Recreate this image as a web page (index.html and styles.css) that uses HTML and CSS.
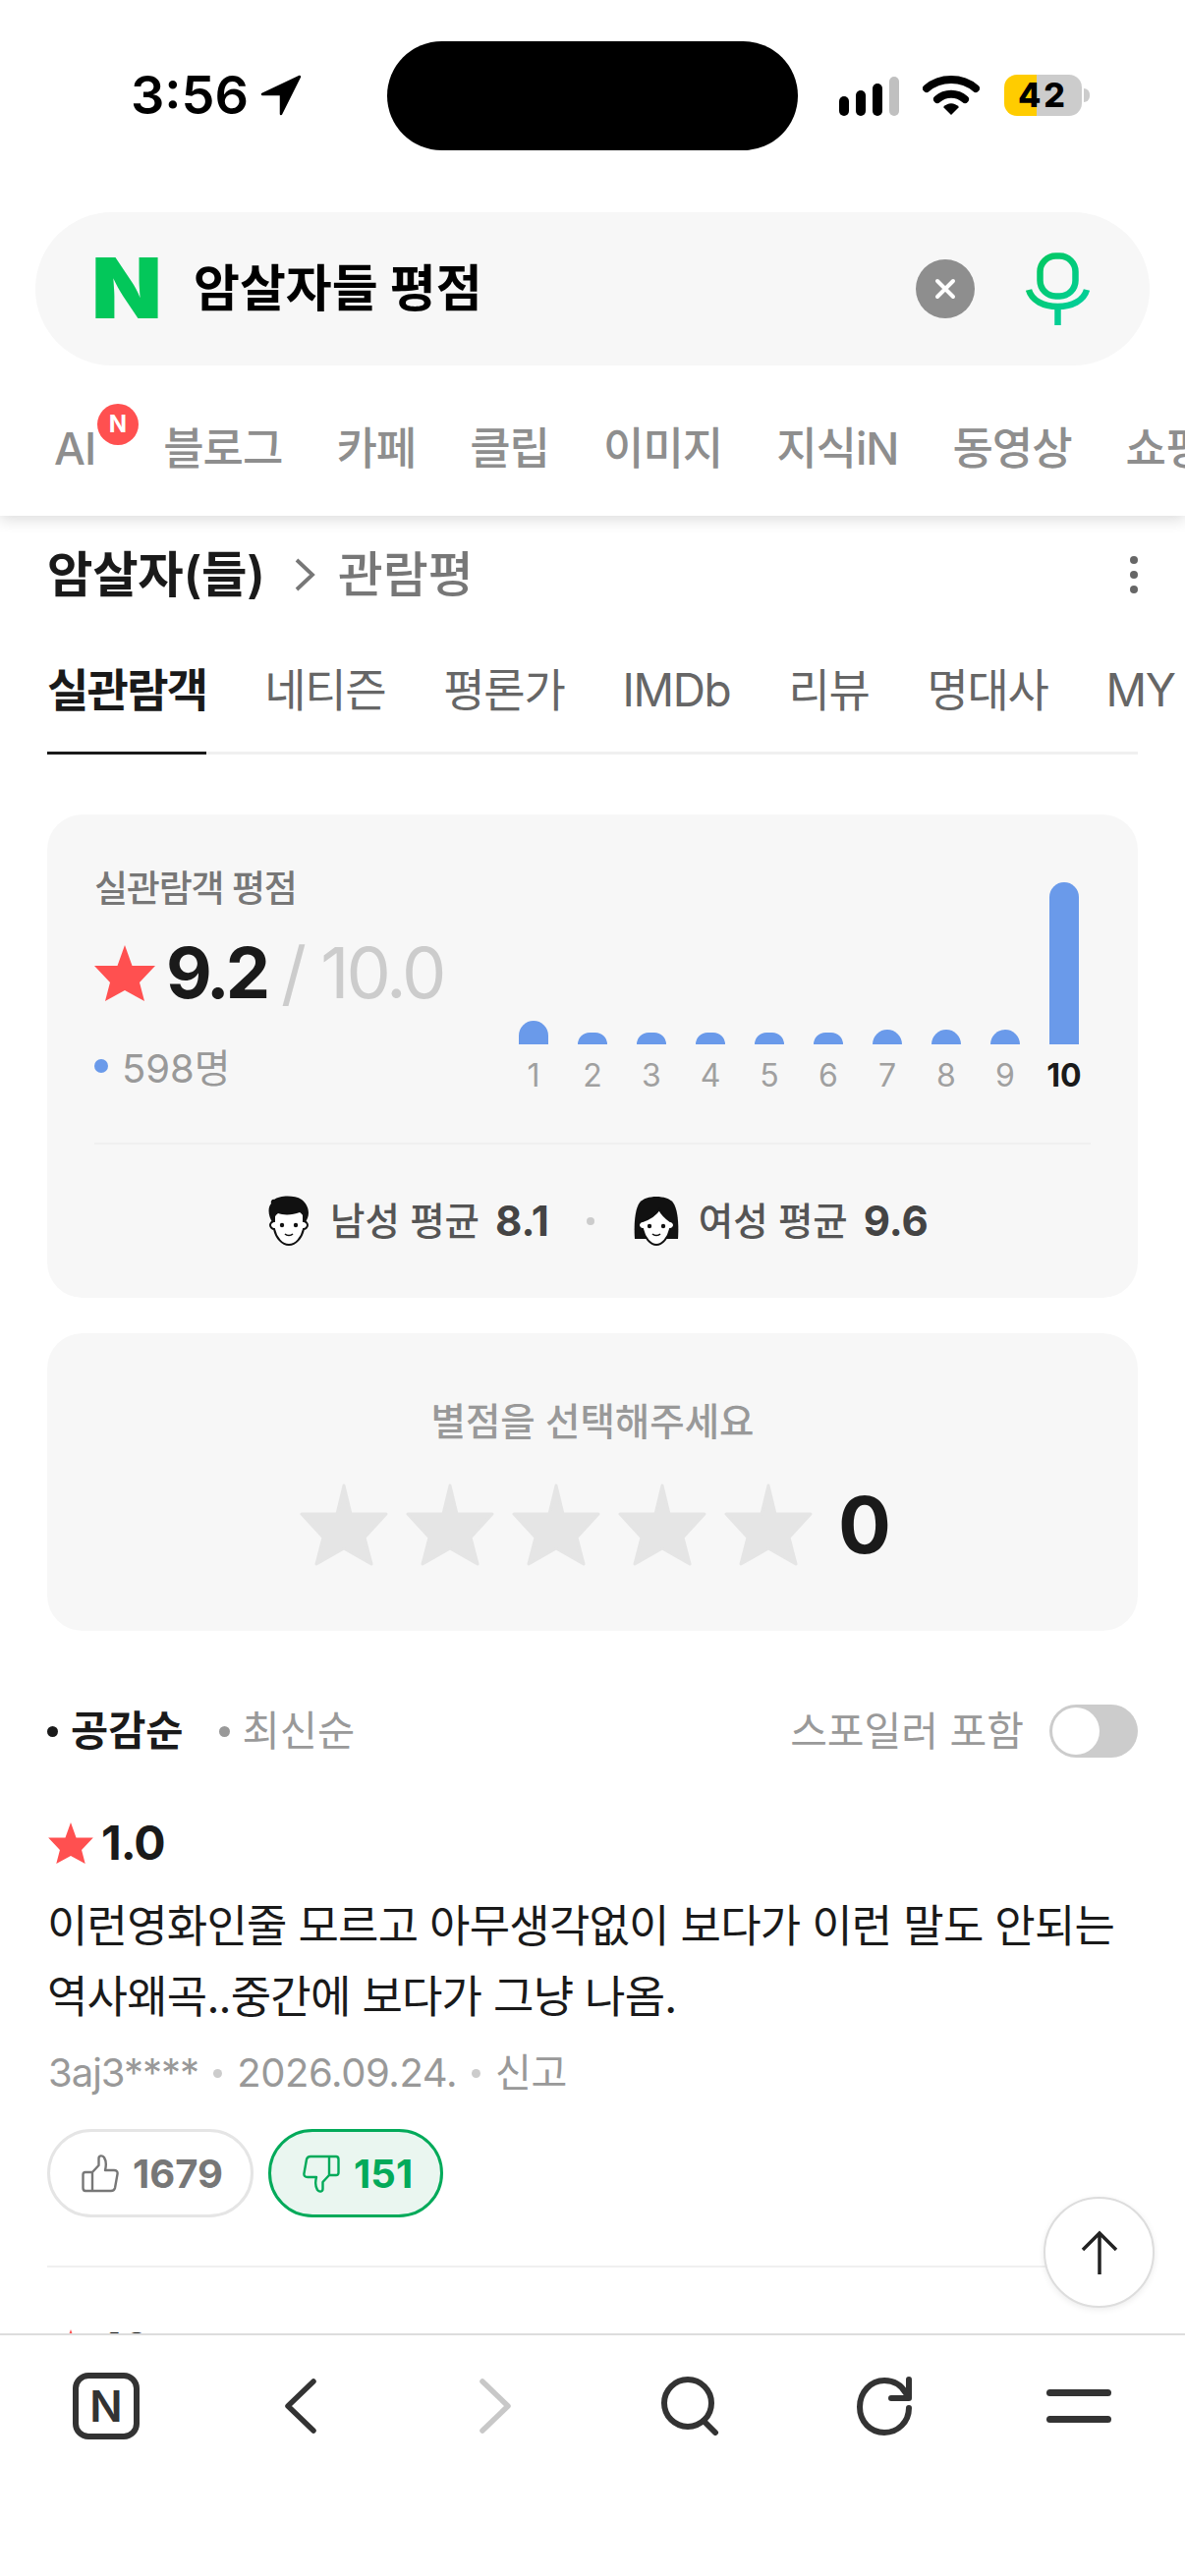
FILE: index.html
```html
<!DOCTYPE html>
<html lang="ko">
<head>
<meta charset="utf-8">
<title>암살자들 평점</title>
<link rel="stylesheet" href="styles.css">
</head>
<body>
<div class="page">
  <header class="header">
    <div class="status">
      <div class="status-left">
        <span class="time">3:56</span>
        <svg class="loc" viewBox="0 0 42 42"><path d="M40 2 L2 20 H21 V40 Z" fill="#000" stroke="#000" stroke-width="2.500" stroke-linejoin="round"/></svg>
      </div>
      <div class="island"></div>
      <div class="status-right">
        <div class="signal"><i class="s1"></i><i class="s2"></i><i class="s3"></i><i class="s4"></i></div>
        <svg class="wifi" viewBox="0 0 58 42" fill="none" stroke="#000" stroke-width="8" stroke-linecap="round"><path d="M4 14 C18 2 40 2 54 14"/><path d="M15 25 C23 18 35 18 43 25"/><path d="M21 33 L29 41 L37 33 C32 28 26 28 21 33Z" fill="#000" stroke="none"/></svg>
        <div class="battery"><span class="batt-num">42</span></div>
        <div class="nub"></div>
      </div>
    </div>
    <div class="search">
      <span class="logo">N</span>
      <span class="query">암살자들 평점</span>
      <span class="clear"><svg viewBox="0 0 60 60" fill="none" stroke="#fff" stroke-width="4" stroke-linecap="round"><path d="M22 22 L38 38 M38 22 L22 38"/></svg></span>
      <svg class="mic" viewBox="0 0 68 76" fill="none" stroke="url(#micg)" stroke-width="6.500" stroke-linecap="butt">
        <defs><linearGradient id="micg" gradientUnits="userSpaceOnUse" x1="5" y1="5" x2="65" y2="60"><stop offset="0" stop-color="#03c75a"/><stop offset="1" stop-color="#03cfa0"/></linearGradient></defs>
        <rect x="16.500" y="4.500" width="36" height="41" rx="16"/><path d="M5 39 C8 50 20 56 34.500 56 C49 56 61 50 64 39"/><path d="M34.500 56 V75"/>
      </svg>
    </div>
    <nav class="cats">
      <span class="cat cat-ai">AI<b class="badge">N</b></span>
      <span class="cat">블로그</span>
      <span class="cat">카페</span>
      <span class="cat">클립</span>
      <span class="cat">이미지</span>
      <span class="cat">지식iN</span>
      <span class="cat">동영상</span>
      <span class="cat">쇼핑</span>
    </nav>
  </header>

  <main class="content">
    <div class="crumb">
      <span class="crumb-main">암살자(들)</span>
      <svg class="crumb-arrow" viewBox="0 0 24 36" fill="none" stroke="#777" stroke-width="3.800"><path d="M5 3 L21 18 L5 33"/></svg>
      <span class="crumb-sub">관람평</span>
      <span class="more"><i></i><i></i><i></i></span>
    </div>
    <div class="tabs">
      <span class="tab tab-on">실관람객</span>
      <span class="tab">네티즌</span>
      <span class="tab">평론가</span>
      <span class="tab">IMDb</span>
      <span class="tab">리뷰</span>
      <span class="tab">명대사</span>
      <span class="tab">MY</span>
    </div>

    <section class="card score-card">
      <div class="score-top">
        <div class="score-left">
          <div class="score-title">실관람객 평점</div>
          <div class="score-line">
            <svg class="star-red" viewBox="0 0 62 57"><path d="M31 0 L38.500 21 H62 L46 38 L51 57 L31 46 L11 57 L16 38 L0 21 H23.500 Z" fill="#ff5050"/></svg>
            <strong class="score-num">9.2</strong>
            <span class="score-max">/ 10.0</span>
          </div>
          <div class="score-count"><i class="dot-blue"></i>598명</div>
        </div>
        <div class="chart">
          <div class="col"><div class="bar" style="height:24px"></div><span class="num">1</span></div>
          <div class="col"><div class="bar" style="height:12px"></div><span class="num">2</span></div>
          <div class="col"><div class="bar" style="height:12px"></div><span class="num">3</span></div>
          <div class="col"><div class="bar" style="height:12px"></div><span class="num">4</span></div>
          <div class="col"><div class="bar" style="height:12px"></div><span class="num">5</span></div>
          <div class="col"><div class="bar" style="height:12px"></div><span class="num">6</span></div>
          <div class="col"><div class="bar" style="height:15px"></div><span class="num">7</span></div>
          <div class="col"><div class="bar" style="height:15px"></div><span class="num">8</span></div>
          <div class="col"><div class="bar" style="height:15px"></div><span class="num">9</span></div>
          <div class="col"><div class="bar" style="height:165px"></div><span class="num num-on">10</span></div>
        </div>
      </div>
      <div class="card-rule"></div>
      <div class="avg">
        <svg class="face" viewBox="0 0 44 52">
          <path d="M7 26 C5 26 3 28 3 30 C3 32 5 34 7 34 C9 43 15 50 22 50 C29 50 35 43 37 34 C39 34 41 32 41 30 C41 28 39 26 37 26 L37 14 H7Z" fill="#fff" stroke="#111" stroke-width="2"/>
          <path d="M6 28 C1 22 0 12 4 8 C3 6 5 3 7 4 C12 0 27 -1 35 4 C42 9 45 20 38 28 C38 22 36 19 33 17 C26 20 16 20 11 18 C8 20 6 24 6 28Z" fill="#111"/>
          <circle cx="15" cy="30" r="2.200" fill="#111"/><circle cx="29" cy="30" r="2.200" fill="#111"/>
          <path d="M18 39 C20 41 24 41 26 39" fill="none" stroke="#111" stroke-width="1.600"/>
        </svg>
        <span class="avg-label">남성 평균</span><b class="avg-val">8.1</b>
        <i class="avg-dot"></i>
        <svg class="face face-f" viewBox="0 0 46 52">
          <path d="M1 44 C0 30 1 14 6 7 C12 -1 34 -1 40 7 C45 14 46 30 45 44 H1Z" fill="#111"/>
          <path d="M9 26 C7 26 5 28 5 30 C5 32 7 34 9 34 C11 43 17 50 23 50 C29 50 35 43 37 34 C39 34 41 32 41 30 C41 28 39 26 37 26 C33 23 28 18 26 14 C22 20 15 24 9 26Z" fill="#fff" stroke="#111" stroke-width="2"/>
          <circle cx="16" cy="31" r="2.200" fill="#111"/><circle cx="30" cy="31" r="2.200" fill="#111"/>
          <path d="M19 39 C21 41 25 41 27 39" fill="none" stroke="#111" stroke-width="1.600"/>
        </svg>
        <span class="avg-label">여성 평균</span><b class="avg-val">9.6</b>
      </div>
    </section>

    <section class="card pick-card">
      <div class="pick-title">별점을 선택해주세요</div>
      <div class="pick-row">
        <svg class="star-grey" viewBox="0 0 90 84"><path d="M45 2 L52 31 H88 L66 55 L73 82 L45 66 L17 82 L24 55 L2 31 H38 Z" fill="#e5e5e5" stroke="#e5e5e5" stroke-width="3" stroke-linejoin="round"/></svg>
        <svg class="star-grey" viewBox="0 0 90 84"><path d="M45 2 L52 31 H88 L66 55 L73 82 L45 66 L17 82 L24 55 L2 31 H38 Z" fill="#e5e5e5" stroke="#e5e5e5" stroke-width="3" stroke-linejoin="round"/></svg>
        <svg class="star-grey" viewBox="0 0 90 84"><path d="M45 2 L52 31 H88 L66 55 L73 82 L45 66 L17 82 L24 55 L2 31 H38 Z" fill="#e5e5e5" stroke="#e5e5e5" stroke-width="3" stroke-linejoin="round"/></svg>
        <svg class="star-grey" viewBox="0 0 90 84"><path d="M45 2 L52 31 H88 L66 55 L73 82 L45 66 L17 82 L24 55 L2 31 H38 Z" fill="#e5e5e5" stroke="#e5e5e5" stroke-width="3" stroke-linejoin="round"/></svg>
        <svg class="star-grey" viewBox="0 0 90 84"><path d="M45 2 L52 31 H88 L66 55 L73 82 L45 66 L17 82 L24 55 L2 31 H38 Z" fill="#e5e5e5" stroke="#e5e5e5" stroke-width="3" stroke-linejoin="round"/></svg>
        <strong class="pick-num">0</strong>
      </div>
    </section>

    <div class="sort">
      <span class="sort-item sort-on"><i class="sort-dot"></i>공감순</span>
      <span class="sort-item"><i class="sort-dot"></i>최신순</span>
      <span class="spoiler">스포일러 포함</span>
      <span class="toggle"><i class="knob"></i></span>
    </div>

    <article class="review">
      <div class="rating">
        <svg class="star-small" viewBox="0 0 62 57"><path d="M31 0 L38.500 21 H62 L46 38 L51 57 L31 46 L11 57 L16 38 L0 21 H23.500 Z" fill="#ff5050"/></svg>
        <b class="rating-num">1.0</b>
      </div>
      <p class="review-text">이런영화인줄 모르고 아무생각없이 보다가 이런 말도 안되는<br>역사왜곡..중간에 보다가 그냥 나옴.</p>
      <div class="meta">
        <span class="meta-id">3aj3****</span><i class="meta-dot"></i><span>2026.09.24.</span><i class="meta-dot"></i><span>신고</span>
      </div>
      <div class="votes">
        <span class="vote">
          <svg class="thumb" viewBox="0 0 38 39" fill="none" stroke="#777" stroke-width="2.400" stroke-linejoin="round"><path d="M11 18 H4 C2.500 18 1.500 19 1.500 20.500 V34 C1.500 36 2.500 37 4 37 H30 C32 37 33.500 36 34 34 L36.500 20 C37 17.500 35.500 16 33 16 H24 C25 12 25.500 7 23 3 C21 0.500 17.500 1 17.500 4 V11 L11 18 V37"/></svg>
          1679
        </span>
        <span class="vote vote-on">
          <svg class="thumb thumb-down" viewBox="0 0 38 39" fill="none" stroke="#03aa5a" stroke-width="2.400" stroke-linejoin="round"><path d="M11 18 H4 C2.500 18 1.500 19 1.500 20.500 V34 C1.500 36 2.500 37 4 37 H30 C32 37 33.500 36 34 34 L36.500 20 C37 17.500 35.500 16 33 16 H24 C25 12 25.500 7 23 3 C21 0.500 17.500 1 17.500 4 V11 L11 18 V37"/></svg>
          151
        </span>
      </div>
    </article>

    <article class="review review-next">
      <div class="rating">
        <svg class="star-small" viewBox="0 0 62 57"><path d="M31 0 L38.500 21 H62 L46 38 L51 57 L31 46 L11 57 L16 38 L0 21 H23.500 Z" fill="#ff5050"/></svg>
        <b class="rating-num">10</b>
      </div>
    </article>
  </main>

  <button class="to-top" type="button" aria-label="맨 위로">
    <svg viewBox="0 0 40 46" fill="none" stroke="#222" stroke-width="3.500"><path d="M20 45 V3 M3 20 L20 3 L37 20"/></svg>
  </button>

  <footer class="toolbar">
    <div class="tool"><span class="n-box">N</span></div>
    <div class="tool"><svg class="ic-chev" viewBox="0 0 32 56" fill="none" stroke="#333" stroke-width="5.500" stroke-linecap="round" stroke-linejoin="round"><path d="M29 3 L3 28 L29 53"/></svg></div>
    <div class="tool"><svg class="ic-chev" viewBox="0 0 32 56" fill="none" stroke="#c8c8c8" stroke-width="5.500" stroke-linecap="round" stroke-linejoin="round"><path d="M3 3 L29 28 L3 53"/></svg></div>
    <div class="tool"><svg class="ic-search" viewBox="0 0 60 60" fill="none" stroke="#333" stroke-width="6" stroke-linecap="round"><circle cx="28" cy="27" r="24"/><path d="M44 45 L56 57"/></svg></div>
    <div class="tool"><svg class="ic-reload" viewBox="0 0 58 60" fill="none" stroke="#333" stroke-width="6" stroke-linecap="round" stroke-linejoin="round"><path d="M51 17 C46 8 38 4 29 4 C15 4 4 16 4 31 C4 46 15 57 29 57 C43 57 54 46 54 32"/><path d="M54 3 V22 H36"/></svg></div>
    <div class="tool"><span class="ic-menu"><i></i><i></i></span></div>
  </footer>
</div>
</body>
</html>
```
FILE: styles.css
```css
* { box-sizing: border-box; }
html, body { margin: 0; padding: 0; background: #fff; }
body { font-family: Inter, "Noto Sans CJK KR", sans-serif; color: #1a1a1a; }
i { display: block; font-style: normal; }
.page { position: relative; width: 1206px; height: 2622px; overflow: hidden; background: #fff; }

/* header */
.header { position: relative; z-index: 2; height: 525px; background: #fff; box-shadow: 0 4px 14px rgba(0,0,0,.14); }
.status { display: flex; align-items: center; height: 194px; padding-left: 133px; }
.status-left { display: flex; align-items: center; gap: 12px; width: 261px; }
.time { font-size: 54px; font-weight: 600; line-height: 60px; color: #000; letter-spacing: 0; }
.loc { width: 42px; height: 42px; }
.island { width: 418px; height: 111px; border-radius: 56px; background: #000; }
.status-right { display: flex; align-items: center; margin-left: 42px; }
.signal { display: flex; align-items: flex-end; gap: 7px; width: 61px; height: 41px; }
.signal i { width: 10px; background: #000; border-radius: 5px; }
.signal .s1 { height: 20px; }
.signal .s2 { height: 26px; }
.signal .s3 { height: 33px; }
.signal .s4 { height: 40px; background: #c0c0c0; }
.wifi { width: 58px; height: 42px; margin-left: 24px; }
.battery { width: 79px; height: 42px; margin-left: 25px; border-radius: 13px; background: linear-gradient(90deg, #fc0 0, #fc0 42%, #ccc 42%, #ccc 100%); display: flex; align-items: center; justify-content: center; }
.batt-num { font-size: 34px; font-weight: 800; line-height: 42px; color: #000; letter-spacing: 3px; }
.nub { width: 6px; height: 14px; margin-left: 2px; background: #ccc; border-radius: 0 7px 7px 0; }

.search { display: flex; align-items: center; height: 156px; margin: 22px 36px 0; padding: 0 60px; background: #f7f7f7; border-radius: 78px; }
.logo { width: 66px; font-size: 85px; font-weight: 900; line-height: 62px; color: #03c75a; text-align: center; transform: scaleX(1.1); }
.query { margin-left: 35px; font-size: 51px; font-weight: 700; line-height: 60px; color: #000; letter-spacing: 0; }
.clear { width: 60px; height: 60px; margin-left: auto; border-radius: 50%; background: #8e8e8e; }
.clear svg { display: block; width: 60px; height: 60px; }
.mic { width: 68px; height: 76px; margin-left: 50px; }

.cats { display: flex; gap: 55px; margin-top: 55px; padding-left: 55px; font-size: 45px; line-height: 60px; font-weight: 500; color: #8e8e8e; white-space: nowrap; letter-spacing: -1px; }
.cat { flex: none; }
.cat-ai { position: relative; margin-right: 14px; }
.badge { position: absolute; left: 44px; top: -16px; width: 42px; height: 42px; border-radius: 50%; background: #ff5050; color: #fff; font-size: 24px; font-weight: 700; line-height: 42px; text-align: center; letter-spacing: 0; }

/* content */
.content { padding: 30px 48px 0; }
.crumb { display: flex; align-items: center; height: 60px; }
.crumb-main { font-size: 50.500px; font-weight: 600; line-height: 60px; color: #1a1a1a; letter-spacing: -0.300px; }
.crumb-arrow { width: 24px; height: 36px; margin: 0 23px 0 27px; }
.crumb-sub { font-size: 50px; font-weight: 500; line-height: 60px; color: #777; }
.more { display: flex; flex-direction: column; gap: 7px; margin-left: auto; }
.more i { width: 8px; height: 8px; border-radius: 50%; background: #666; }

.tabs { display: flex; gap: 59px; margin-top: 57px; height: 96px; border-bottom: 3px solid #f0f0f0; font-size: 46px; line-height: 60px; color: #666; white-space: nowrap; letter-spacing: -1.300px; }
.tab { position: relative; flex: none; height: 96px; }
.tab-on { font-weight: 700; color: #1a1a1a; border-bottom: 3px solid #1a1a1a; letter-spacing: -1.750px; }

.card { background: #f7f7f7; border-radius: 36px; }
.score-card { margin-top: 61px; padding: 52px 48px 53px; }
.score-top { display: flex; justify-content: space-between; align-items: flex-end; padding-right: 12px; }
.score-left { align-self: flex-start; padding-bottom: 5px; }
.score-title { font-size: 37px; font-weight: 500; line-height: 48px; color: #777; letter-spacing: -1.200px; }
.score-line { display: flex; align-items: center; height: 90px; margin-top: 16px; }
.star-red { width: 62px; height: 57px; }
.score-num { margin-left: 11px; font-size: 72px; font-weight: 700; line-height: 90px; color: #1a1a1a; letter-spacing: -4px; }
.score-max { margin-left: 15px; font-size: 72px; font-weight: 400; line-height: 90px; color: #ccc; letter-spacing: -3px; }
.score-count { display: flex; align-items: center; height: 50px; margin-top: 25px; font-size: 40px; color: #999; }
.dot-blue { width: 14px; height: 14px; margin-right: 14px; border-radius: 50%; background: #6a9aea; }

.chart { display: flex; align-items: flex-end; gap: 30px; }
.col { display: flex; flex-direction: column; align-items: center; width: 30px; }
.bar { width: 30px; background: #6a9aea; border-radius: 15px 15px 0 0; }
.num { margin-top: 12px; font-size: 32px; line-height: 40px; color: #a0a0a0; }
.num-on { font-weight: 700; color: #1a1a1a; }

.card-rule { height: 2px; margin-top: 48px; background: #f0f0f0; }
.avg { display: flex; align-items: center; justify-content: center; height: 50px; margin-top: 53px; padding-left: 11px; }
.face { width: 44px; height: 52px; }
.face-f { width: 46px; }
.avg-label { margin-left: 20px; font-size: 38.500px; font-weight: 500; line-height: 50px; color: #555; }
.avg-val { margin-left: 16px; font-size: 42px; font-weight: 700; line-height: 50px; color: #444; }
.avg-dot { width: 8px; height: 8px; margin: 0 40px 0 38px; border-radius: 50%; background: #ccc; }

.pick-card { margin-top: 36px; height: 303px; padding-top: 66px; }
.pick-title { font-size: 38.500px; font-weight: 500; line-height: 48px; color: #999; text-align: center; }
.pick-row { display: flex; align-items: center; gap: 18px; margin-top: 39px; padding-left: 257px; }
.star-grey { width: 90px; height: 84px; flex: none; }
.pick-num { margin-left: 8px; font-size: 80px; font-weight: 700; line-height: 84px; color: #1a1a1a; }

.sort { display: flex; align-items: center; height: 54px; margin-top: 75px; font-size: 41.500px; line-height: 54px; }
.sort-item { display: flex; align-items: center; margin-right: 36px; color: #999; }
.sort-on { font-weight: 700; color: #1a1a1a; }
.sort-dot { width: 11px; height: 11px; margin-right: 13px; border-radius: 50%; background: currentColor; }
.spoiler { margin-left: auto; font-size: 41px; color: #999; }
.toggle { display: block; width: 90px; height: 54px; margin-left: 26px; padding: 3px; border-radius: 27px; background: #ccc; }
.knob { width: 48px; height: 48px; border-radius: 50%; background: #fff; }

.review { margin-top: 63px; }
.review-next { margin-top: 60px; }
.rating { display: flex; align-items: center; height: 48px; }
.star-small { width: 46px; height: 42px; margin-left: 1px; }
.rating-num { margin-left: 8px; font-size: 48px; font-weight: 700; line-height: 48px; color: #1a1a1a; letter-spacing: -1px; }
.review-text { margin: 25px 0 0; font-size: 45px; font-weight: 400; line-height: 72px; color: #1a1a1a; white-space: nowrap; letter-spacing: -0.800px; }
.meta { display: flex; align-items: center; height: 50px; margin-top: 16px; padding-left: 1px; font-size: 40px; line-height: 50px; color: #999; letter-spacing: -0.400px; }
.meta-id { letter-spacing: -1px; }
.meta-dot { width: 9px; height: 9px; margin: 0 15px; border-radius: 50%; background: #ccc; }
.votes { display: flex; gap: 15px; margin-top: 32px; padding-bottom: 49px; border-bottom: 2px solid #f0f0f0; }
.vote { display: flex; align-items: center; height: 90px; padding: 0 28px 0 32px; border: 3px solid #e5e5e5; border-radius: 45px; font-size: 40px; font-weight: 700; color: #777; }
.vote-on { border-color: #03aa5a; background: #eaf6f0; color: #03aa5a; }
.thumb { width: 38px; height: 39px; margin-right: 14px; }
.thumb-down { transform: rotate(180deg); }

.to-top { position: absolute; left: 1062px; top: 2236px; width: 113px; height: 113px; padding: 0; border: 2px solid #ddd; border-radius: 50%; background: #fff; box-shadow: 0 2px 6px rgba(0,0,0,.08); display: flex; align-items: center; justify-content: center; }
.to-top svg { width: 40px; height: 46px; }

.toolbar { position: absolute; left: 0; right: 0; bottom: 0; height: 247px; padding: 0 9px; background: #fff; border-top: 2px solid #ddd; display: flex; align-items: flex-start; }
.tool { display: flex; align-items: center; justify-content: center; width: 198px; height: 144px; flex: none; }
.n-box { display: block; width: 68px; height: 68px; border: 6px solid #333; border-radius: 16px; font-size: 44px; font-weight: 600; line-height: 56px; text-align: center; color: #333; }
.ic-chev { width: 32px; height: 56px; }
.ic-search { width: 60px; height: 60px; }
.ic-reload { width: 58px; height: 60px; }
.ic-menu { display: flex; flex-direction: column; gap: 20px; }
.ic-menu i { width: 66px; height: 7px; border-radius: 4px; background: #333; }
```
